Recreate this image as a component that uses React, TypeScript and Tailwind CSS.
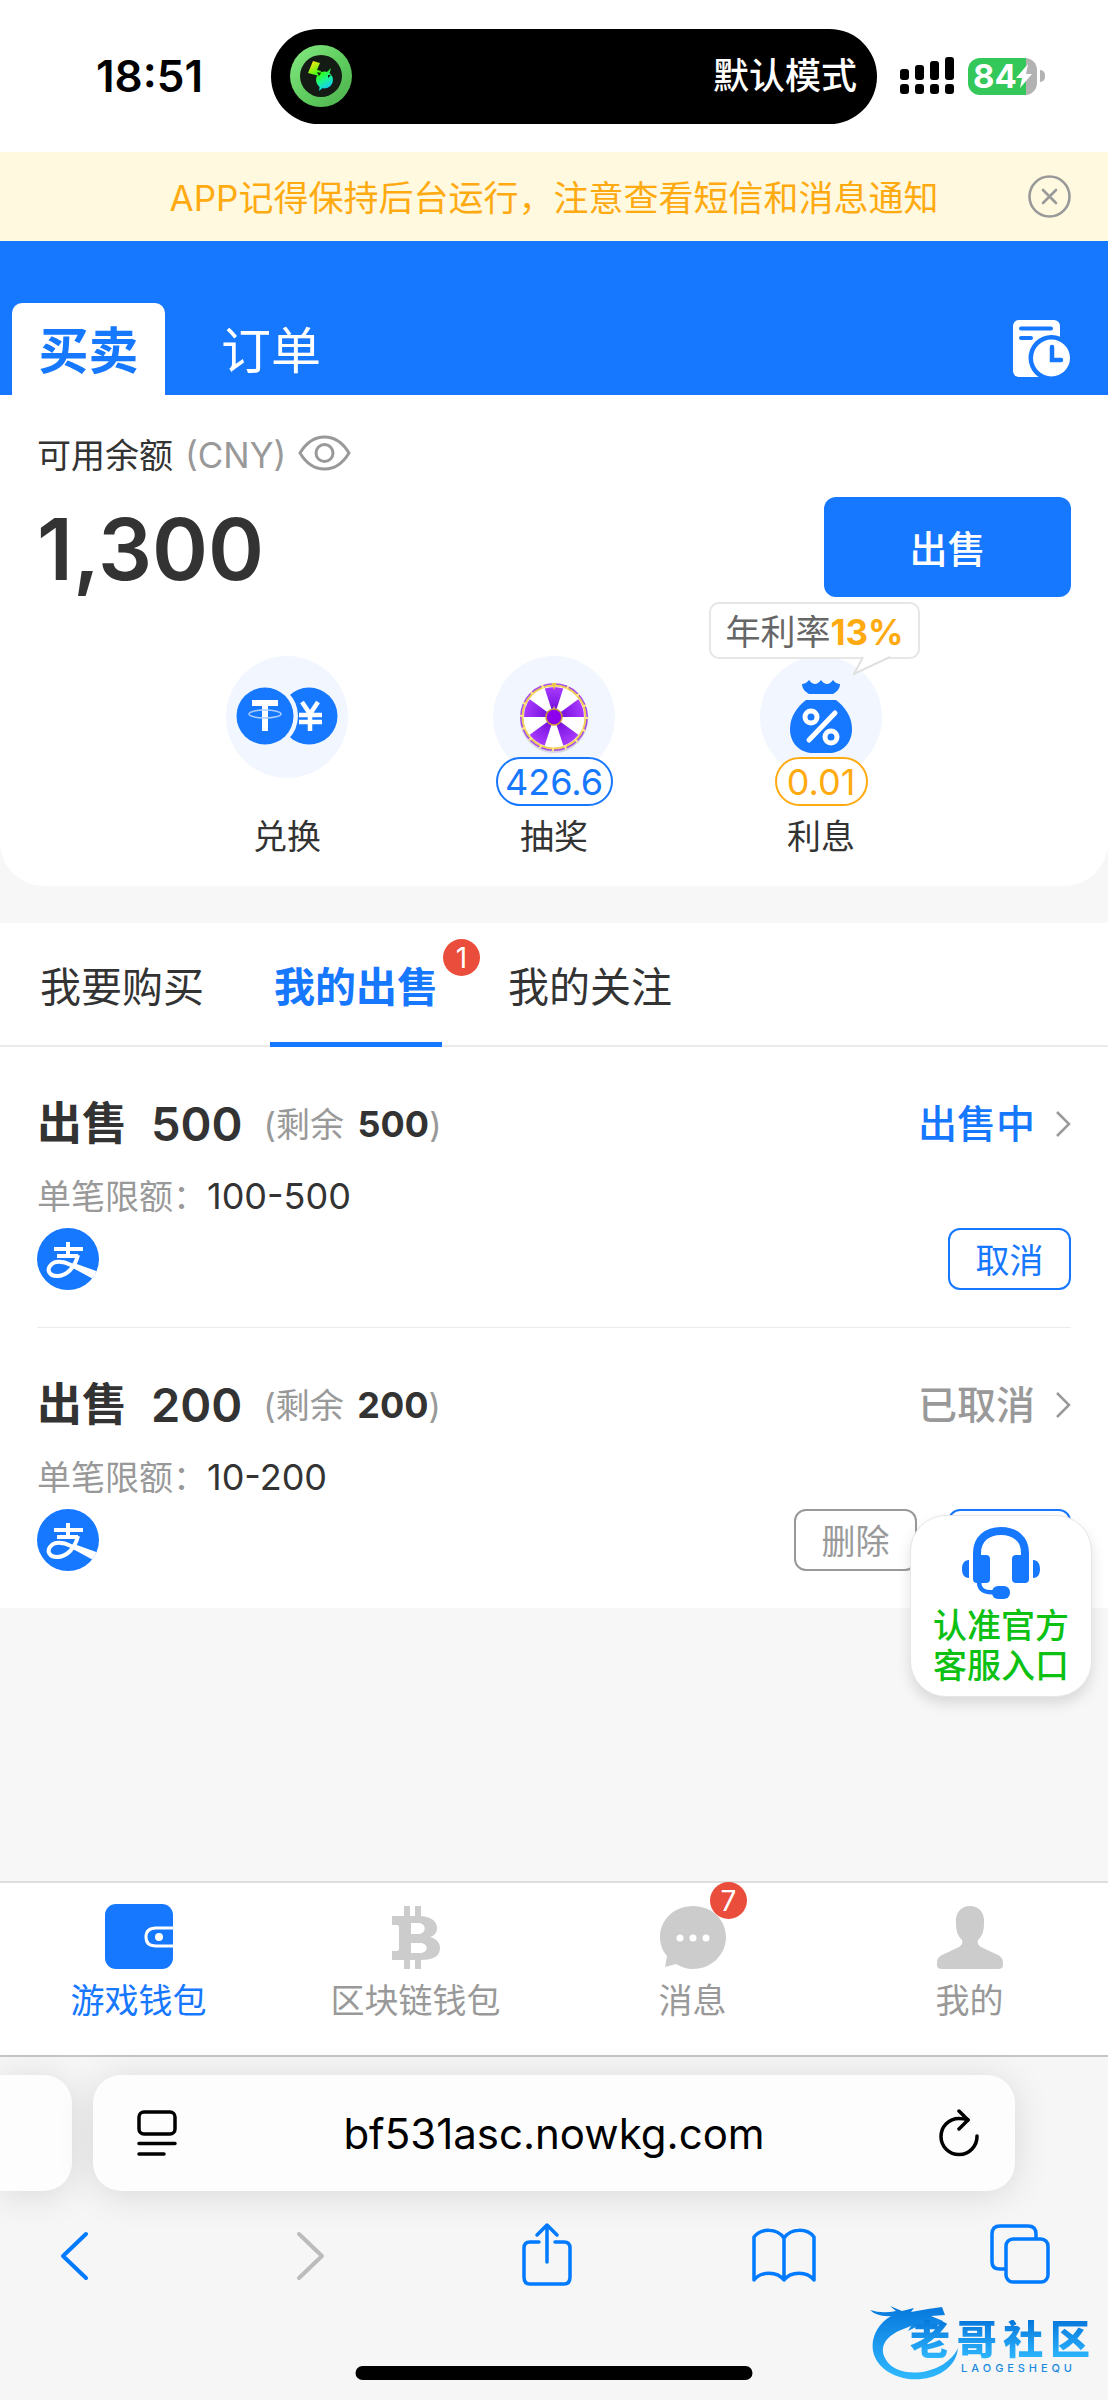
import React from "react";

const FONT = "font-['Inter','Noto_Sans_CJK_SC',sans-serif]";

function AppBadgeIcon() {
  return (
    <svg className="size-[62px]" viewBox="0 0 62 62" aria-hidden="true">
      <defs>
        <linearGradient id="ring" x1="0" y1="0" x2="1" y2="1">
          <stop offset="0" stopColor="#86ea82" />
          <stop offset="0.6" stopColor="#5bc95c" />
          <stop offset="1" stopColor="#4fae4c" />
        </linearGradient>
        <linearGradient id="bolt" gradientUnits="userSpaceOnUse" x1="22" y1="17" x2="39" y2="44">
          <stop offset="0" stopColor="#f5e60a" />
          <stop offset="0.45" stopColor="#2fff1c" />
          <stop offset="0.7" stopColor="#1cf29a" />
          <stop offset="1" stopColor="#12c4ff" />
        </linearGradient>
      </defs>
      <circle cx="31" cy="31" r="31" fill="url(#ring)" />
      <circle cx="31" cy="31" r="21" fill="#141a14" />
      <g fill="url(#bolt)">
        <path d="M23 16L30 18L27 25L31 26L29 31L18 28Z" />
        <circle cx="34.500" cy="35" r="8.500" />
        <path d="M41 23L34 30L39 30ZM29 46L30 39L34 42Z" />
      </g>
      <path d="M27 27L31 28L29 31M38 30L41 30L38 33Z" fill="#141a14" />
    </svg>
  );
}

function SignalIcon() {
  const bars = [12, 16, 20, 24];
  return (
    <svg className="h-[38px] w-[54px]" viewBox="0 0 54 38" aria-hidden="true">
      {bars.map((h, i) => (
        <g key={h}>
          <rect x={i * 15} y={24 - h} width="9" height={h - 1} rx="3" />
          <rect x={i * 15} y="27" width="9" height="10" rx="3" />
        </g>
      ))}
    </svg>
  );
}

function Battery() {
  return (
    <span className="flex items-center gap-[3px]">
      <span className="flex h-[37px] w-[69px] items-center overflow-hidden rounded-[12px] bg-[linear-gradient(90deg,#34c759_84%,#b2b2b2_84%)] pl-[5px] text-[33px] leading-none font-bold text-white">
        84
        <svg className="-ml-px h-6 w-4 shrink-0" viewBox="0 0 16 24" aria-hidden="true">
          <path d="M12 0L0 14H6L4 24L16 10H10Z" fill="#fff" />
        </svg>
      </span>
      <span className="h-3 w-[5px] rounded-r-full bg-[#b2b2b2]" />
    </span>
  );
}

function StatusBar() {
  return (
    <header className="grid h-[152px] grid-cols-[271px_1fr_231px] items-center bg-white text-black">
      <time className="pl-7 text-center text-[44px] font-semibold">18:51</time>
      <div className="flex h-[95px] items-center justify-between rounded-full bg-black pr-5 pl-[19px] text-[36px] font-medium text-white">
        <AppBadgeIcon />
        <span>默认模式</span>
      </div>
      <div className="flex items-center gap-[14px] pl-[23px]">
        <SignalIcon />
        <Battery />
      </div>
    </header>
  );
}

function Notice() {
  return (
    <div className="grid h-[89px] grid-cols-[1fr_43px] items-center bg-[#fff9e0] pr-[37px] pl-[80px]">
      <p className="pt-1 text-center text-[35px] whitespace-nowrap text-[#ffaa10]">APP记得保持后台运行，注意查看短信和消息通知</p>
      <button aria-label="关闭">
        <svg className="size-[43px]" viewBox="0 0 43 43" fill="none" stroke="#999" strokeWidth="2.6" strokeLinecap="round" aria-hidden="true">
          <circle cx="21.5" cy="21.5" r="20" />
          <path d="M15 15L28 28M28 15L15 28" />
        </svg>
      </button>
    </div>
  );
}

function TopTabs() {
  return (
    <nav className="flex h-[154px] items-end bg-[#1677ff] pr-[37px] pl-3">
      <button className="h-[92px] w-[153px] rounded-t-[10px] bg-white pt-1 text-[50px] leading-none font-bold text-[#1677ff]">买卖</button>
      <button className="h-[92px] w-[212px] pt-1 text-[50px] leading-none text-white">订单</button>
      <button className="mb-[17px] ml-auto" aria-label="记录">
        <svg className="size-[59px]" viewBox="0 0 59 59" aria-hidden="true">
          <rect x="1" y="1" width="47" height="57" rx="6" fill="#fff" />
          <path d="M9 9.500H39M9 19H19" stroke="#1677ff" strokeWidth="4" strokeLinecap="round" />
          <circle cx="39.500" cy="39" r="23" fill="#1677ff" />
          <circle cx="39.500" cy="39" r="18.500" fill="#fff" />
          <path d="M40 28V41H49" fill="none" stroke="#1677ff" strokeWidth="4.500" strokeLinecap="round" />
        </svg>
      </button>
    </nav>
  );
}

function ExchangeIcon() {
  return (
    <svg className="h-[60px] w-[102px]" viewBox="0 0 102 60" fill="none" aria-hidden="true">
      <circle cx="73" cy="29" r="28.500" fill="#1677ff" />
      <circle cx="29" cy="29" r="33" fill="#f1f6ff" />
      <circle cx="29" cy="29" r="28.500" fill="#1677ff" />
      <path d="M16 16H42M29 14V44" stroke="#fff" strokeWidth="6" />
      <ellipse cx="29" cy="27" rx="16" ry="4" stroke="#a9ccff" strokeWidth="1.500" />
      <path d="M66 15L74 27L82 15M74 27V44M63 28H86M63 35H86" stroke="#fff" strokeWidth="4.500" />
    </svg>
  );
}

function wedge(i: number) {
  const a = ((i * 36 - 108) * Math.PI) / 180;
  const b = a + Math.PI / 5;
  const r = 30;
  return `M36 36L${36 + r * Math.cos(a)} ${36 + r * Math.sin(a)}A${r} ${r} 0 0 1 ${36 + r * Math.cos(b)} ${36 + r * Math.sin(b)}Z`;
}

function WheelIcon() {
  return (
    <svg className="size-[72px]" viewBox="0 0 72 72" aria-hidden="true">
      <defs>
        <radialGradient id="purple" gradientUnits="userSpaceOnUse" cx="36" cy="36" r="32">
          <stop offset="0.2" stopColor="#7410dc" />
          <stop offset="1" stopColor="#ac3dff" />
        </radialGradient>
      </defs>
      <circle cx="36" cy="38" r="34" fill="#b9b4c6" opacity="0.500" />
      <circle cx="36" cy="36" r="34" fill="#a64bea" />
      <circle cx="36" cy="36" r="31.500" fill="#fff" stroke="#edcf55" strokeWidth="2" />
      {[0, 2, 4, 6, 8].map((i) => (
        <path key={i} d={wedge(i)} fill="url(#purple)" />
      ))}
      <circle cx="36" cy="36" r="32.500" fill="none" stroke="#ffe98a" strokeWidth="3.500" strokeDasharray="2 10.763" />
      <path d="M36 25L39 32H33Z" fill="#e8c64a" />
      <circle cx="36" cy="36" r="8" fill="#8c00ee" stroke="#c99a35" strokeWidth="1.500" />
      <path d="M36 9L33.500 2H38.500Z" fill="#e8c64a" />
    </svg>
  );
}

function MoneyBagIcon() {
  return (
    <svg className="h-[76px] w-[64px]" viewBox="0 0 64 76" aria-hidden="true">
      <path d="M13 5Q17 5 20 1Q23 5 26 5Q29 5 32 1Q35 5 38 5Q41 5 44 1Q47 5 51 5Q51 11 44 15H20Q13 11 13 5Z" fill="#1677ff" />
      <path d="M17 21H47C55 27 63 37 63 50C63 66 51 74 40 74H24C13 74 1 66 1 50C1 37 9 27 17 21Z" fill="#1677ff" />
      <g fill="none" stroke="#fff" strokeWidth="5" strokeLinecap="round">
        <circle cx="22" cy="38" r="6" />
        <circle cx="42" cy="58" r="6" />
        <path d="M46 34L20 61" />
      </g>
    </svg>
  );
}

type ActionProps = { label: string; badge?: string; badgeClass?: string; tip?: React.ReactNode; children: React.ReactNode };

function Action({ label, badge, badgeClass = "", tip, children }: ActionProps) {
  return (
    <button className="relative flex flex-col items-center">
      <span className="flex size-[122px] items-center justify-center rounded-full bg-[#f1f6ff]">{children}</span>
      {badge && (
        <span className={"absolute top-[101px] flex h-[49px] items-center justify-center rounded-full border-2 bg-white text-[36px] leading-none " + badgeClass}>{badge}</span>
      )}
      <span className="mt-[34px] text-[34px] leading-[50px] text-[#333]">{label}</span>
      {tip}
    </button>
  );
}

function RateTip() {
  return (
    <span className="absolute -top-[54px] -left-[51px] flex h-[57px] w-[211px] items-center justify-center rounded-[10px] border-2 border-[#e6e6e6] bg-white pt-1 text-[35px] leading-none whitespace-nowrap text-[#666]">
      年利率<b className="text-[#ffaa10]">13%</b>
      <svg className="absolute top-[52px] left-[142px] h-5 w-10" viewBox="0 0 40 20" aria-hidden="true">
        <path d="M10 0L1 18L37 0" fill="#fff" />
        <path d="M10 1L1 18L37 1" fill="none" stroke="#e0e0e0" strokeWidth="2" />
      </svg>
    </span>
  );
}

function BalanceCard() {
  return (
    <section className="rounded-b-[44px] bg-white px-[37px] pt-[34px] pb-6">
      <div className="flex h-[52px] items-center text-[34px] text-[#333]">
        可用余额<span className="ml-3 text-[35px] text-[#999]">(CNY)</span>
        <button className="mb-1 ml-3" aria-label="隐藏余额">
          <svg className="h-9 w-[53px]" viewBox="0 0 53 36" fill="none" stroke="#999" strokeWidth="3" aria-hidden="true">
            <path d="M2 18C8 8 17 2 26.500 2S45 8 51 18C45 28 36 34 26.500 34S8 28 2 18Z" />
            <circle cx="26.500" cy="18" r="8.500" />
          </svg>
        </button>
      </div>
      <div className="mt-4 flex items-center justify-between">
        <strong className="pt-1 text-[85px] leading-none font-semibold text-[#333]">1,300</strong>
        <button className="h-[100px] w-[247px] rounded-[12px] bg-[#1677ff] pt-1 text-[38px] font-medium text-white">出售</button>
      </div>
      <div className="mt-[59px] flex justify-center gap-[145px]">
        <Action label="兑换"><ExchangeIcon /></Action>
        <Action label="抽奖" badge="426.6" badgeClass="w-[117px] border-[#1677ff] text-[#1677ff]"><WheelIcon /></Action>
        <Action label="利息" badge="0.01" badgeClass="w-[93px] border-[#ffaa10] text-[#ffaa10]" tip={<RateTip />}><MoneyBagIcon /></Action>
      </div>
    </section>
  );
}

function ListTabs() {
  return (
    <nav className="flex h-[124px] gap-[62px] border-b-2 border-[#ebebeb] bg-white pl-[36px] text-[41px] text-[#333]">
      <button className="w-[172px] pt-2 whitespace-nowrap">我要购买</button>
      <button className="relative -mb-0.5 w-[172px] border-b-[5px] border-[#1677ff] pt-[11px] font-bold whitespace-nowrap text-[#1677ff]">
        我的出售
        <span className="absolute top-4 left-[173px] flex size-[37px] items-center justify-center rounded-full bg-[#eb4d3d] text-[28px] leading-none font-normal text-white">1</span>
      </button>
      <button className="w-[172px] pt-2 whitespace-nowrap">我的关注</button>
    </nav>
  );
}

function AlipayIcon() {
  return (
    <svg className="size-[62px]" viewBox="0 0 62 62" fill="none" aria-hidden="true">
      <clipPath id="coin"><circle cx="31" cy="31" r="31" /></clipPath>
      <circle cx="31" cy="31" r="31" fill="#1677ff" />
      <g clipPath="url(#coin)">
        <path d="M31 14V27M17 21H46M20 28H41" stroke="#fff" strokeWidth="4" />
        <path d="M41 27C38 39 30 48 20 48C12 48 10 42 13 38C17 32 26 33 34 37L62 49" stroke="#fff" strokeWidth="4" />
        <path d="M37 35L62 44L58 52L34 39Z" fill="#fff" />
      </g>
    </svg>
  );
}

type OrderProps = { amount: string; limit: string; status: string; statusClass: string; children: React.ReactNode };

function Order({ amount, limit, status, statusClass, children }: OrderProps) {
  return (
    <article className="mx-[37px] pt-[46px] pb-[37px]">
      <div className="flex h-[62px] items-center">
        <h2 className="flex items-center gap-6 text-[45px] font-bold whitespace-nowrap text-[#333]">
          出售 <span className="text-[47px] font-semibold">{amount}</span>
        </h2>
        <p className="ml-[21px] text-[34px] whitespace-nowrap text-[#999]">
          (剩余 <b className="ml-1 text-[36px] font-bold text-[#333]">{amount}</b>)
        </p>
        <button className={"ml-auto flex items-center gap-5 text-[39px] font-medium " + statusClass}>
          {status}
          <svg className="h-[26px] w-4" viewBox="0 0 16 26" fill="none" stroke="#999" strokeWidth="2.500" aria-hidden="true">
            <path d="M2 1L14 13L2 25" />
          </svg>
        </button>
      </div>
      <p className="mt-4 text-[34px] leading-[50px] text-[#999]">
        单笔限额：<span className="text-[36px] text-[#333]">{limit}</span>
      </p>
      <div className="mt-1.5 flex items-center justify-between">
        <AlipayIcon />
        <div className="flex gap-[31px]">{children}</div>
      </div>
    </article>
  );
}

const smallButton = "h-[62px] w-[123px] rounded-[12px] border-2 pt-1 text-[34px] leading-none ";

function SupportButton() {
  return (
    <button className="absolute top-[1515px] right-4 flex h-[182px] w-[182px] flex-col items-center rounded-[36px] border border-[#e6e6e6] bg-white pt-[10px] text-[34px] leading-[40px] font-medium text-[#0dc113] shadow-[0_7px_14px_rgba(0,0,0,0.12)]">
      <svg className="mb-1.5 h-[74px] w-[80px] shrink-0" viewBox="0 0 80 74" fill="none" aria-hidden="true">
        <path d="M16 32V27C16 13 26 5 40 5S64 13 64 27V32" stroke="#1677ff" strokeWidth="8" />
        <rect x="12" y="29" width="17" height="28" rx="4" fill="#1677ff" />
        <rect x="51" y="29" width="17" height="28" rx="4" fill="#1677ff" />
        <path d="M8 34V52C3 52 1 48 1 43S3 34 8 34ZM72 34V52C77 52 79 48 79 43S77 34 72 34Z" fill="#1677ff" />
        <path d="M18 55C18 64 23 67 34 66" stroke="#1677ff" strokeWidth="4.500" />
        <rect x="31" y="60" width="18" height="13" rx="6" fill="#1677ff" />
      </svg>
      <span>认准官方</span>
      <span>客服入口</span>
    </button>
  );
}

const navIcons = {
  wallet: (
    <svg className="h-[65px] w-[68px]" viewBox="0 0 68 65" aria-hidden="true">
      <rect width="68" height="65" rx="11" fill="#1677ff" />
      <path d="M68 24H51C43 24 41 28 41 33S43 42 51 42H68" fill="none" stroke="#fff" strokeWidth="3" />
      <circle cx="54" cy="33" r="4" fill="#fff" />
    </svg>
  ),
  bitcoin: (
    <svg className="h-[63px] w-[48px]" viewBox="0 0 48 63" fill="#ccc" aria-hidden="true">
      <path d="M12 0H18V11H12ZM23 0H29V11H23ZM12 53H18V63H12ZM23 53H29V63H23Z" />
      <path fillRule="evenodd" d="M0 10H26C40 10 45 16 45 22C45 27 42 30 38 31C45 33 48 37 48 42C48 50 42 54 28 54H0V45H5Q7 45 7 43V21Q7 19 5 19H0ZM19 17V28H26C35 28 35 17 26 17ZM19 37V47H28C37 47 37 37 28 37Z" />
    </svg>
  ),
  message: (
    <svg className="h-[63px] w-[66px]" viewBox="0 0 66 63" aria-hidden="true">
      <path d="M33 0C52 0 66 14 66 31S52 63 33 63C27 63 21 61 16 58L5 61L7 50C2 44 0 38 0 31C0 14 14 0 33 0Z" fill="#ccc" />
      <g fill="#fff">
        <circle cx="20" cy="32" r="3.500" />
        <circle cx="33" cy="32" r="3.500" />
        <circle cx="46" cy="32" r="3.500" />
      </g>
    </svg>
  ),
  person: (
    <svg className="h-[63px] w-[66px]" viewBox="0 0 66 63" aria-hidden="true">
      <path d="M33 0C42 0 48 7 47 17C47 26 45 30 41 34C40 37 41 39 44 41L61 49C66 52 66 54 66 59Q66 63 61 63H5Q0 63 0 59C0 54 0 52 5 49L22 41C25 39 26 37 25 34C21 30 19 26 19 17C18 7 24 0 33 0Z" fill="#ccc" />
    </svg>
  ),
};

function BottomNav() {
  const items = [
    { label: "游戏钱包", icon: navIcons.wallet, active: true },
    { label: "区块链钱包", icon: navIcons.bitcoin },
    { label: "消息", icon: navIcons.message, count: 7 },
    { label: "我的", icon: navIcons.person },
  ];
  return (
    <nav className="grid h-[174px] grid-cols-4 border-t-2 border-[#dedede] bg-white pt-[21px]">
      {items.map((item) => (
        <a key={item.label} href="#" className={"relative flex flex-col items-center text-[34px] leading-[48px] " + (item.active ? "text-[#1677ff]" : "text-[#999]")}>
          <span className="flex h-[65px] items-end">{item.icon}</span>
          <span className="mt-2">{item.label}</span>
          {item.count && (
            <span className="absolute -top-[22px] left-[156px] flex size-[37px] items-center justify-center rounded-full bg-[#eb4d3d] text-[28px] text-white">{item.count}</span>
          )}
        </a>
      ))}
    </nav>
  );
}

function AddressBar() {
  return (
    <div className="flex gap-[21px] pt-[18px] pr-[93px]">
      <div className="h-[116px] w-[72px] shrink-0 rounded-r-[28px] bg-[#fdfdfd] shadow-[0_4px_36px_rgba(0,0,0,0.12)]" />
      <div className="flex h-[116px] flex-1 items-center justify-between rounded-[28px] bg-[#fdfdfd] pr-[36px] pl-[44px] shadow-[0_4px_36px_rgba(0,0,0,0.12)]">
        <button aria-label="页面设置">
          <svg className="h-[46px] w-[40px]" viewBox="0 0 40 46" fill="none" stroke="#000" strokeWidth="3.500" strokeLinecap="round" aria-hidden="true">
            <rect x="2" y="2" width="36" height="22" rx="5" />
            <path d="M2 33.500H38M2 44H27" />
          </svg>
        </button>
        <input aria-label="网址" defaultValue="bf531asc.nowkg.com" className="w-[520px] bg-transparent pr-2 text-center text-[42px] text-black outline-none" />
        <button aria-label="刷新">
          <svg className="h-[48px] w-[40px]" viewBox="0 0 40 48" fill="none" stroke="#000" strokeWidth="3.500" strokeLinecap="round" strokeLinejoin="round" aria-hidden="true">
            <path d="M38 27A18 18 0 1 1 20 9.500Q25 9.500 29 11" />
            <path d="M20 2L29 11L20 20" />
          </svg>
        </button>
      </div>
    </div>
  );
}

function Toolbar() {
  const button = "flex w-16 justify-center ";
  return (
    <div className="mt-[31px] flex items-center justify-between pr-[56px] pl-[42px] text-[#007aff]">
      <button aria-label="后退" className={button}>
        <svg className="h-[64px] w-[32px]" viewBox="0 0 32 64" fill="none" stroke="currentColor" strokeWidth="4" strokeLinecap="round" strokeLinejoin="round" aria-hidden="true">
          <path d="M28 12L5 34L28 56" />
        </svg>
      </button>
      <button aria-label="前进" className={button + "text-[#bcbcbc]"}>
        <svg className="h-[64px] w-[32px]" viewBox="0 0 32 64" fill="none" stroke="currentColor" strokeWidth="4" strokeLinecap="round" strokeLinejoin="round" aria-hidden="true">
          <path d="M4 12L27 34L4 56" />
        </svg>
      </button>
      <button aria-label="分享" className={button}>
        <svg className="h-[64px] w-[50px]" viewBox="0 0 50 64" fill="none" stroke="currentColor" strokeWidth="3.500" strokeLinecap="round" strokeLinejoin="round" aria-hidden="true">
          <path d="M17 20H8Q2 20 2 26V55Q2 62 8 62H42Q48 62 48 55V26Q48 20 42 20H33M25 40V4M15 13L25 3L35 13" />
        </svg>
      </button>
      <button aria-label="书签" className={button}>
        <svg className="h-[60px] w-[64px]" viewBox="0 0 64 60" fill="none" stroke="currentColor" strokeWidth="3.500" strokeLinejoin="round" aria-hidden="true">
          <path d="M32 14C25 4 9 4 2 13V56C9 47 25 47 32 56C39 47 55 47 62 56V13C55 4 39 4 32 14ZM32 14V56" />
        </svg>
      </button>
      <button aria-label="标签页" className={button}>
        <svg className="h-[60px] w-[60px]" viewBox="0 0 60 60" fill="none" stroke="currentColor" strokeWidth="3.500" aria-hidden="true">
          <path d="M16 45H10Q2 45 2 38V10Q2 2 10 2H38Q46 2 46 10V14" />
          <rect x="16" y="15" width="42" height="43" rx="7" />
        </svg>
      </button>
    </div>
  );
}

function CommunityLogo() {
  return (
    <div className="absolute right-[16px] bottom-[20px] h-[78px] w-[222px]">
      <svg className="absolute inset-0 h-[78px] w-[94px]" viewBox="0 0 94 78" aria-hidden="true">
        <defs>
          <linearGradient id="dragon" x1="0" y1="0" x2="0" y2="1">
            <stop offset="0" stopColor="#0777dc" />
            <stop offset="1" stopColor="#2fb9ff" />
          </linearGradient>
        </defs>
        <path d="M0 8Q12 12 26 9L20 4L32 9L44 6L41 10L58 7L72 5L75 13L61 14L73 19L70 23L58 22L51 27L48 24L38 29L41 24L31 28C16 34 9 45 15 56C26 79 75 74 88 46C85 78 37 87 13 66C-5 50 2 25 21 14Q7 15 0 8Z" fill="url(#dragon)" />
      </svg>
      <span className="absolute top-[18px] left-[40px] flex w-[180px] justify-between text-[40px] leading-[40px] font-black text-[#1390ea]">
        {["老", "哥", "社", "区"].map((char) => <span key={char} className="bg-[linear-gradient(#0777dc,#2fb9ff)] bg-clip-text text-transparent">{char}</span>)}
      </span>
      <span className="absolute top-[61px] left-[91px] flex w-[111px] justify-between text-[11px] leading-none font-medium text-[#1989df]">
        {["L", "A", "O", "G", "E", "S", "H", "E", "Q", "U"].map((letter, i) => <span key={i}>{letter}</span>)}
      </span>
    </div>
  );
}

export default function App() {
  return (
    <div className={"relative flex min-h-screen flex-col overflow-hidden bg-[#f7f7f7] " + FONT}>
      <StatusBar />
      <Notice />
      <TopTabs />
      <BalanceCard />
      <main className="mt-[37px] bg-white">
        <ListTabs />
        <Order amount="500" limit="100-500" status="出售中" statusClass="text-[#1677ff]">
          <button className={smallButton + "border-[#1677ff] text-[#1677ff]"}>取消</button>
        </Order>
        <hr className="mx-[37px] border-t border-[#ebebeb]" />
        <Order amount="200" limit="10-200" status="已取消" statusClass="text-[#999]">
          <button className={smallButton + "border-[#999] text-[#999]"}>删除</button>
          <button className={smallButton + "border-[#1677ff] text-[#1677ff]"} aria-label="重新出售" />
        </Order>
      </main>
      <SupportButton />
      <div className="mt-auto">
        <BottomNav />
        <footer className="relative h-[345px] border-t-2 border-[#c6c6c6] bg-[#f6f6f6]">
          <AddressBar />
          <Toolbar />
          <CommunityLogo />
          <div className="absolute bottom-[20px] left-1/2 h-[14px] w-[397px] -translate-x-1/2 rounded-full bg-black" />
        </footer>
      </div>
    </div>
  );
}
